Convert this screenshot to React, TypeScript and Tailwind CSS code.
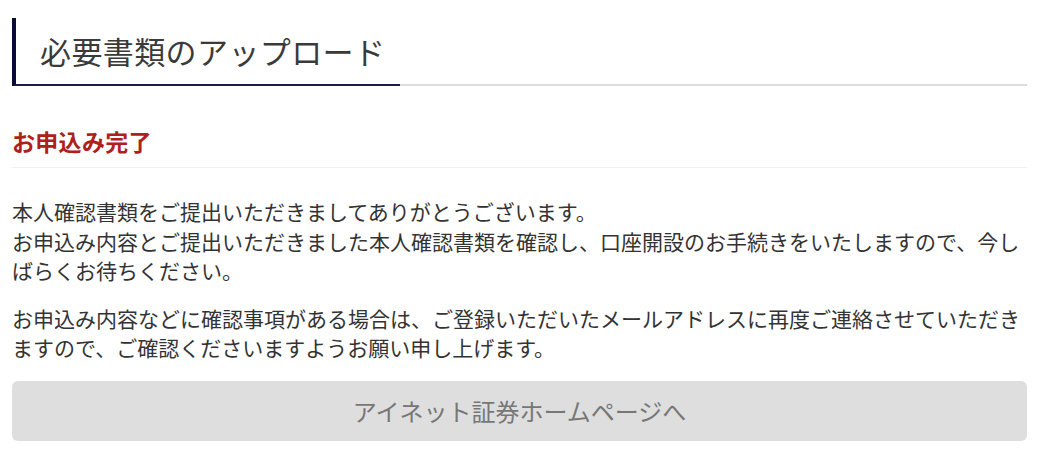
export default function App() {
  return (
    <div className="min-h-screen bg-white pl-3 pr-[11px] pt-[18px] font-['Noto_Sans_CJK_JP','Noto_Sans',sans-serif] text-[#333]">
      {/* 見出し */}
      <div className="border-b-2 border-[#dcdde2]">
        <h1 className="-mb-[2px] inline-block h-[68px] border-b-2 border-l-4 border-b-[#1b1b45] border-l-[#0b0b35] pl-6 pr-[15px] text-[31px] leading-[66px] font-normal tracking-[0.4px] text-[#3a3a3a]">
          必要書類のアップロード
        </h1>
      </div>

      <h2 className="mt-10 border-b border-[#f0f0f0] pb-[11px] text-[23px] font-bold leading-[30px] tracking-[0.3px] text-[#b0201b]">
        お申込み完了
      </h2>

      <p className="mt-[29px] text-[21px] leading-[29.5px]">
        本人確認書類をご提出いただきましてありがとうございます。
        <br />
        お申込み内容とご提出いただきました本人確認書類を確認し、口座開設のお手続きをいたしますので、今しばらくお待ちください。
      </p>

      <p className="mt-[18px] text-[21px] leading-[29.5px]">
        お申込み内容などに確認事項がある場合は、ご登録いただいたメールアドレスに再度ご連絡させていただきますので、ご確認くださいますようお願い申し上げます。
      </p>

      <button
        type="button"
        className="mt-[18px] flex h-[60px] w-full items-center justify-center rounded-md bg-[#dedede] text-[24px] text-[#777]"
      >
        アイネット証券ホームページへ
      </button>
    </div>
  );
}
